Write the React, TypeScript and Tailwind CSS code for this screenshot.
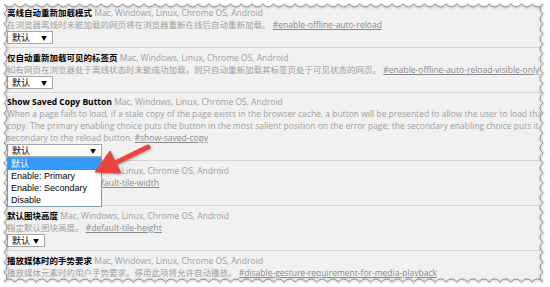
import clsx from 'clsx'

const PLATFORMS = 'Mac, Windows, Linux, Chrome OS, Android'

const Select = ({ width, open }: { width: string; open?: boolean }) => (
  <div
    className={clsx(
      'relative flex h-[13px] items-center justify-between border border-[#a6a6a6] bg-white pr-[5px] pl-[4px] text-[9px] leading-[11px] text-black',
      width
    )}
  >
    <span>默认</span>
    <span className="text-[6px] leading-none">▼</span>
    {open && (
      <div className="absolute top-[12px] -left-px z-10 w-[calc(100%+2px)] border border-[#7f9db9] bg-white font-[family-name:'Liberation_Sans','Noto_Sans_CJK_SC',sans-serif] text-[9px] leading-[12px] text-black">
        <div className="h-[12px] bg-[#3399ff] pl-[3px] text-white">默认</div>
        <div className="h-[12px] pl-[3px]">Enable: Primary</div>
        <div className="h-[12px] pl-[3px]">Enable: Secondary</div>
        <div className="h-[12px] pl-[3px]">Disable</div>
      </div>
    )}
  </div>
)

type Flag = {
  title: string
  desc: string[]
  link: string
  select?: string
  open?: boolean
  top?: string
}

const flags: Flag[] = [
  {
    title: '离线自动重新加载模式',
    desc: ['在浏览器离线时未能加载的网页将在浏览器重新在线后自动重新加载。'],
    link: '#enable-offline-auto-reload',
    select: 'w-[46px]',
    top: 'pt-[5px]'
  },
  {
    title: '仅自动重新加载可见的标签页',
    desc: ['如有网页在浏览器处于离线状态时未能成功加载，则只自动重新加载其标签页处于可见状态的网页。'],
    link: '#enable-offline-auto-reload-visible-only',
    select: 'w-[46px]'
  },
  {
    title: 'Show Saved Copy Button',
    desc: [
      'When a page fails to load, if a stale copy of the page exists in the browser cache, a button will be presented to allow the user to load that stale',
      'copy. The primary enabling choice puts the button in the most salient position on the error page; the secondary enabling choice puts it',
      'secondary to the reload button.'
    ],
    link: '#show-saved-copy',
    select: 'w-[95px]',
    open: true,
    top: 'pt-[3px]'
  },
  {
    title: '默认图块宽度',
    desc: ['指定默认图块宽度。'],
    link: '#default-tile-width',
    select: 'w-[38px]'
  },
  {
    title: '默认图块高度',
    desc: ['指定默认图块高度。'],
    link: '#default-tile-height',
    select: 'w-[38px]'
  },
  {
    title: '播放媒体时的手势要求',
    desc: ['播放媒体元素时的用户手势要求。停用此项将允许自动播放。'],
    link: '#disable-gesture-requirement-for-media-playback'
  }
]

// stamp-like torn edge around the screenshot
const edgePath = () => {
  const x0 = 4
  const y0 = 4
  const x1 = 543
  const y1 = 282
  const d = 6
  let p = `M${x0} ${y0}`
  const nx = 50
  const stepX = (x1 - x0) / nx
  for (let i = 0; i < nx; i++) {
    const a = x0 + i * stepX
    p += ` Q${a + stepX / 2} ${y0 + d} ${a + stepX} ${y0}`
  }
  const ny = 28
  const stepY = (y1 - y0) / ny
  for (let i = 0; i < ny; i++) {
    const a = y0 + i * stepY
    p += ` Q${x1 - d} ${a + stepY / 2} ${x1} ${a + stepY}`
  }
  for (let i = 0; i < nx; i++) {
    const a = x1 - i * stepX
    p += ` Q${a - stepX / 2} ${y1 - d} ${a - stepX} ${y1}`
  }
  for (let i = 0; i < ny; i++) {
    const a = y1 - i * stepY
    p += ` Q${x0 + d} ${a - stepY / 2} ${x0} ${a - stepY}`
  }
  return p + ' Z'
}

const App = () => {
  const edge = edgePath()

  return (
    <div className="relative h-[287px] w-[550px] overflow-hidden bg-[#f1f1f1] font-[family-name:'Open_Sans','Noto_Sans_CJK_SC',sans-serif] text-[8.5px] leading-[12px] whitespace-nowrap">
      <div className="flex flex-col pt-[2px]">
        {flags.map((flag, i) => (
          <div
            key={flag.link}
            className={clsx(
              'pb-[3px] pl-[7px]',
              flag.top ?? 'pt-[4px]',
              i > 0 && 'border-t border-[#d6d6d6]'
            )}
          >
            <div>
              <span className="font-bold text-black">{flag.title}</span>{' '}
              <span className="text-[#a0a0a0]">{PLATFORMS}</span>
            </div>
            {flag.desc.map((line, j) => (
              <div key={j} className="text-[#a0a0a0]">
                {line}
                {j === flag.desc.length - 1 && (
                  <>
                    {' '}
                    <span className="text-[#8a8a8a] underline">{flag.link}</span>
                  </>
                )}
              </div>
            ))}
            {flag.select && <Select width={flag.select} open={flag.open} />}
          </div>
        ))}
      </div>

      <svg className="pointer-events-none absolute inset-0 z-20" width="550" height="287">
        <defs>
          <filter id="sh" x="-10%" y="-10%" width="120%" height="120%">
            <feDropShadow dx="0.5" dy="0.5" stdDeviation="0.8" floodColor="#000" floodOpacity="0.4" />
          </filter>
        </defs>
        <path d={`M0 0 H550 V287 H0 Z ${edge}`} fill="#fff" fillRule="evenodd" />
        <path d={edge} fill="none" stroke="#8f8f8f" strokeWidth="1" filter="url(#sh)" />
      </svg>

      <svg className="pointer-events-none absolute inset-0 z-30" width="550" height="287">
        <defs>
          <filter id="ash" x="-20%" y="-20%" width="140%" height="140%">
            <feDropShadow dx="1" dy="1" stdDeviation="1" floodColor="#000" floodOpacity="0.3" />
          </filter>
        </defs>
        <g filter="url(#ash)" fill="#e8453c" stroke="#e8453c">
          <line x1="148" y1="147" x2="113" y2="164" strokeWidth="5" strokeLinecap="round" />
          <polygon points="95,172 110,151 121,173" strokeWidth="1" strokeLinejoin="round" />
        </g>
      </svg>
    </div>
  )
}

export default App
